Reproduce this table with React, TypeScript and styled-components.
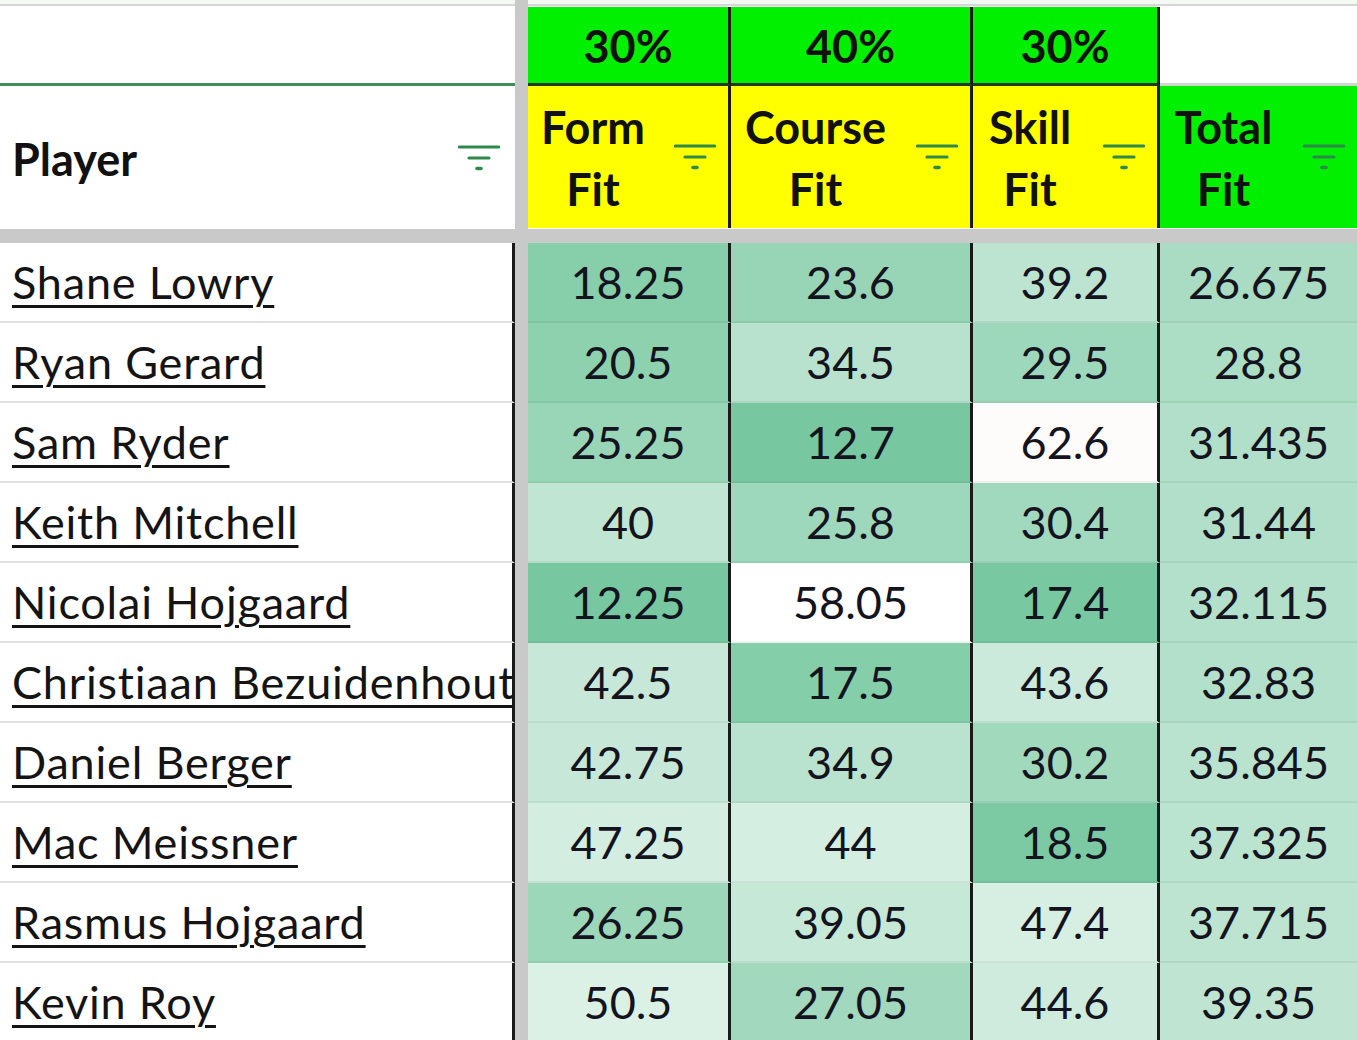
import React from 'react';
import styled, { createGlobalStyle } from 'styled-components';

type ColumnKey = 'form' | 'course' | 'skill' | 'total';

interface Player {
  name: string;
  form: number;
  course: number;
  skill: number;
  total: number;
}

interface Column {
  key: ColumnKey;
  weight?: string;
  label: string;
  head: 'yellow' | 'green';
  low: number;
  mid: number;
  high: number;
  divider: boolean;
}

const players: Player[] = [
  { name: 'Shane Lowry', form: 18.25, course: 23.6, skill: 39.2, total: 26.675 },
  { name: 'Ryan Gerard', form: 20.5, course: 34.5, skill: 29.5, total: 28.8 },
  { name: 'Sam Ryder', form: 25.25, course: 12.7, skill: 62.6, total: 31.435 },
  { name: 'Keith Mitchell', form: 40, course: 25.8, skill: 30.4, total: 31.44 },
  { name: 'Nicolai Hojgaard', form: 12.25, course: 58.05, skill: 17.4, total: 32.115 },
  { name: 'Christiaan Bezuidenhout', form: 42.5, course: 17.5, skill: 43.6, total: 32.83 },
  { name: 'Daniel Berger', form: 42.75, course: 34.9, skill: 30.2, total: 35.845 },
  { name: 'Mac Meissner', form: 47.25, course: 44, skill: 18.5, total: 37.325 },
  { name: 'Rasmus Hojgaard', form: 26.25, course: 39.05, skill: 47.4, total: 37.715 },
  { name: 'Kevin Roy', form: 50.5, course: 27.05, skill: 44.6, total: 39.35 },
];

const columns: Column[] = [
  { key: 'form', weight: '30%', label: 'Form Fit', head: 'yellow', low: 0, mid: 64, high: 200, divider: true },
  { key: 'course', weight: '40%', label: 'Course Fit', head: 'yellow', low: 2, mid: 58.05, high: 200, divider: true },
  { key: 'skill', weight: '30%', label: 'Skill Fit', head: 'yellow', low: 7, mid: 60, high: 160, divider: true },
  { key: 'total', label: 'Total Fit', head: 'green', low: -20, mid: 76, high: 200, divider: false },
];

const GREEN = [87, 187, 138];
const WHITE = [255, 255, 255];
const RED = [230, 124, 115];

// green -> white -> red colour scale, like the sheet's conditional format
const scaleColor = (v: number, col: Column) => {
  const mix = (a: number[], b: number[], t: number) =>
    `rgb(${a.map((c, i) => Math.round(c + (b[i] - c) * t)).join(',')})`;
  if (v <= col.mid) {
    const t = Math.max(0, Math.min(1, (v - col.low) / (col.mid - col.low)));
    return mix(GREEN, WHITE, t);
  }
  const t = Math.max(0, Math.min(1, (v - col.mid) / (col.high - col.mid)));
  return mix(WHITE, RED, t);
};

const FilterIcon: React.FC = () => (
  <FilterSvg viewBox="0 0 42 26" width="42" height="26">
    <line x1="1.5" y1="2" x2="40.5" y2="2" stroke="#2e8a4a" strokeWidth="3.2" strokeLinecap="round" />
    <line x1="11" y1="13" x2="31" y2="13" stroke="#2e8a4a" strokeWidth="3.2" strokeLinecap="round" />
    <line x1="19" y1="23.5" x2="23" y2="23.5" stroke="#2e8a4a" strokeWidth="3.6" strokeLinecap="round" />
  </FilterSvg>
);

const App: React.FC = () => {
  return (
    <>
      <GlobalStyle />
      <Sheet>
        <TopStrip />
        <FreezeColumn />
        <FreezeRow />

        <BlankHead />
        {columns.map(col =>
          col.weight ? (
            <WeightCell key={col.key} $divider={col.divider}>{col.weight}</WeightCell>
          ) : (
            <EmptyWeight key={col.key} />
          )
        )}

        <PlayerHead>
          <HeadLabel $align="left">Player</HeadLabel>
          <FilterIcon />
        </PlayerHead>
        {columns.map(col => (
          <HeadCell key={col.key} $tone={col.head} $divider={col.divider}>
            <HeadLabel $align="center">{col.label}</HeadLabel>
            <FilterIcon />
          </HeadCell>
        ))}

        {players.map(p => (
          <React.Fragment key={p.name}>
            <NameCell>
              <NameLink>{p.name}</NameLink>
            </NameCell>
            {columns.map(col => (
              <ValueCell key={col.key} $bg={scaleColor(p[col.key], col)} $divider={col.divider}>
                {p[col.key]}
              </ValueCell>
            ))}
          </React.Fragment>
        ))}
      </Sheet>
    </>
  );
};

export default App;

const GlobalStyle = createGlobalStyle`
  html, body {
    margin: 0;
    padding: 0;
    background: #fff;
    overflow: hidden;
  }
  body {
    font-family: Lato, "Open Sans", sans-serif;
    color: #111;
  }
`;

const Sheet = styled.div`
  display: grid;
  grid-template-columns: 515px 13px 203px 242px 187px 197px;
  grid-template-rows: 6px 80px 143px 14px repeat(10, 80px);
  width: 1357px;
  height: 1040px;
  overflow: hidden;
  font-size: 45px;
`;

const TopStrip = styled.div`
  grid-column: 1 / -1;
  grid-row: 1;
  background: #f3f8f3;
  border-bottom: 2px solid #d6d6d6;
  box-sizing: border-box;
`;

const FreezeColumn = styled.div`
  grid-column: 2;
  grid-row: 1 / -1;
  background: #c9c9c9;
  z-index: 1;
`;

const FreezeRow = styled.div`
  grid-column: 1 / -1;
  grid-row: 4;
  background: #c9c9c9;
`;

const BlankHead = styled.div`
  grid-column: 1;
  grid-row: 2;
  background: #fff;
  border-bottom: 3px solid #3f8f55;
`;

const WeightCell = styled.div<{ $divider: boolean }>`
  grid-row: 2;
  display: flex;
  align-items: center;
  justify-content: center;
  margin-top: 1px;
  background: #00f000;
  border-bottom: 3px solid #1f3a22;
  border-right: ${p => (p.$divider ? '3px solid #1a1a1a' : 'none')};
  font-weight: 700;
  padding-top: 2px;
  box-sizing: border-box;
`;

const EmptyWeight = styled.div`
  grid-row: 2;
  background: #fff;
  border-bottom: 3px solid #cfd6cf;
`;

const PlayerHead = styled.div`
  grid-column: 1;
  grid-row: 3;
  display: flex;
  align-items: center;
  padding: 0 15px 0 12px;
  background: #fff;
`;

const HeadCell = styled.div<{ $tone: 'yellow' | 'green'; $divider: boolean }>`
  grid-row: 3;
  display: flex;
  align-items: center;
  padding-right: 12px;
  background: ${p => (p.$tone === 'yellow' ? '#ffff00' : '#00f000')};
  border-right: ${p => (p.$divider ? '3px solid #1a1a1a' : 'none')};
  margin-bottom: 1px;
`;

const HeadLabel = styled.div<{ $align: 'left' | 'center' }>`
  flex: 1;
  text-align: ${p => p.$align};
  font-weight: 700;
  line-height: 62px;
  padding-right: ${p => (p.$align === 'center' ? '16px' : '0')};
  padding-top: 2px;
  word-spacing: 200px;
`;

const FilterSvg = styled.svg`
  flex-shrink: 0;
  display: block;
`;

const NameCell = styled.div`
  display: flex;
  align-items: center;
  padding-left: 12px;
  background: #fff;
  border-right: 3px solid #1a1a1a;
  border-bottom: 2px solid #e1e1e1;
  overflow: hidden;
  white-space: nowrap;
`;

const NameLink = styled.span`
  text-decoration: underline;
  text-decoration-thickness: 3px;
  text-underline-offset: 6px;
  letter-spacing: 0.8px;
  color: #141414;
`;

const ValueCell = styled.div<{ $bg: string; $divider: boolean }>`
  display: flex;
  align-items: center;
  justify-content: center;
  background: ${p => p.$bg};
  border-right: ${p => (p.$divider ? '3px solid #1a1a1a' : 'none')};
  border-bottom: 2px solid rgba(0, 0, 0, 0.05);
  color: #141420;
`;
